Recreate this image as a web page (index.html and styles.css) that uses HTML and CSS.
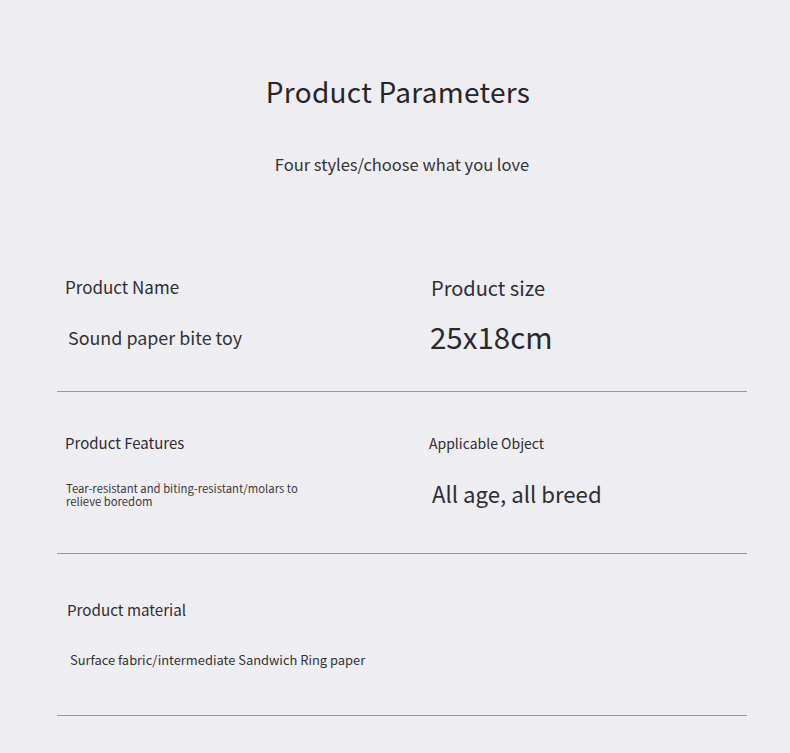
FILE: index.html
```html
<!DOCTYPE html>
<html>
<head>
<meta charset="utf-8">
<link rel="stylesheet" href="styles.css">
</head>
<body>
<div class="page">
  <header class="head">
    <h1 class="title">Product Parameters</h1>
    <p class="subtitle">Four styles/choose what you love</p>
  </header>
  <section class="table">
    <div class="row row1">
      <div class="cell">
        <div class="label l-name">Product Name</div>
        <div class="value v-name">Sound paper bite toy</div>
      </div>
      <div class="cell">
        <div class="label l-size">Product size</div>
        <div class="value v-size">25x18cm</div>
      </div>
    </div>
    <div class="row row2">
      <div class="cell">
        <div class="label l-feat">Product Features</div>
        <div class="value v-feat">Tear-resistant and biting-resistant/molars to relieve boredom</div>
      </div>
      <div class="cell">
        <div class="label l-obj">Applicable Object</div>
        <div class="value v-obj">All age, all breed</div>
      </div>
    </div>
    <div class="row row3">
      <div class="cell">
        <div class="label l-mat">Product material</div>
        <div class="value v-mat">Surface fabric/intermediate Sandwich Ring paper</div>
      </div>
      <div class="cell"></div>
    </div>
  </section>
</div>
</body>
</html>
```
FILE: styles.css
```css
* { box-sizing: border-box; }
html, body { margin: 0; padding: 0; }
body {
  background: #eeedf2;
  font-family: "Noto Sans CJK SC", "Noto Sans", sans-serif;
  color: #2b2b2e;
  width: 790px;
  height: 753px;
  overflow: hidden;
}
.page { padding: 0 43px 0 57px; }
.head { text-align: center; padding-top: 71px; }
.title {
  margin: 0 8px 0 0;
  font-size: 28px;
  font-weight: 400;
  line-height: 40px;
  letter-spacing: 0.3px;
  color: #262629;
}
.subtitle {
  margin: 41px 0 0 0;
  font-size: 16.5px;
  line-height: 24px;
  color: #333336;
}
.table { margin-top: 53px; }
.row {
  display: grid;
  grid-template-columns: 366px 1fr;
  height: 162px;
  border-bottom: 1px solid #9a999e;
}
.row1 { height: 163px; }
.cell { display: flex; flex-direction: column; align-items: flex-start; }
.label, .value { font-weight: 400; }
.l-name { margin: 46px 0 0 8px; font-size: 17px; line-height: 24px; color: #2e2e31; }
.v-name { margin: 25px 0 0 11px; font-size: 17.9px; line-height: 26px; color: #333336; }
.l-size { margin: 45px 0 0 8px; font-size: 20px; line-height: 28px; color: #2e2e31; }
.v-size { margin: 14px 0 0 7px; font-size: 29.5px; line-height: 40px; color: #29292c; }
.l-feat { margin: 40px 0 0 8px; font-size: 15px; line-height: 22px; color: #2e2e31; }
.v-feat { margin: 28px 0 0 9px; width: 260px; font-size: 11.3px; line-height: 13px; color: #3a3a3d; }
.l-obj { margin: 41px 0 0 6px; font-size: 14px; line-height: 20px; color: #2e2e31; }
.v-obj { margin: 26px 0 0 9px; font-size: 22.2px; line-height: 28px; color: #2e2e31; }
.l-mat { margin: 44px 0 0 10px; font-size: 15.2px; line-height: 22px; color: #2e2e31; }
.v-mat { margin: 31px 0 0 13px; font-size: 12.9px; line-height: 18px; color: #333336; }
```
